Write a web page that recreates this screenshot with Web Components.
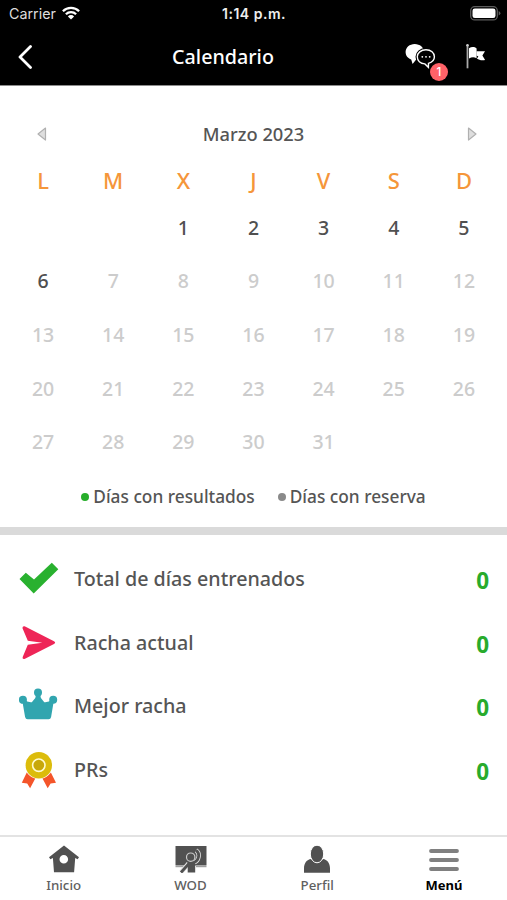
<!DOCTYPE html>
<html lang="es">
<head>
<meta charset="utf-8">
<title>Calendario</title>
<style>
  body {
    margin: 0;
    background: #fff;
    font-family: "Noto Sans", "Open Sans", sans-serif;
    font-weight: 500;
    color: #555;
  }
</style>
</head>
<body>
<calendar-app></calendar-app>

<script>
const ICONS = {
  back: `<svg width="16" height="24" viewBox="0 0 16 24"><path d="M13.500 1.500 3 12 13.500 22.500" fill="none" stroke="#fff" stroke-width="2.800" stroke-linecap="round" stroke-linejoin="round"/></svg>`,
  wifi: `<svg width="18" height="14" viewBox="0 0 18 14"><g fill="none" stroke="#fff" stroke-width="2.300"><path d="M.9 5.200a11.500 11.500 0 0 1 16.200 0"/><path d="M3.900 8.300a7.200 7.200 0 0 1 10.200 0"/></g><path d="M5.900 10.400a4.400 4.400 0 0 1 6.200 0L9 13.500z" fill="#fff"/></svg>`,
  battery: `<svg width="31" height="15" viewBox="0 0 31 15"><rect x=".7" y=".7" width="26.600" height="13.200" rx="4" fill="none" stroke="#5c5c5c" stroke-width="1.300"/><rect x="2.500" y="2.500" width="23" height="9.600" rx="2.300" fill="#fff"/><path d="M28.700 5v4.600q1.700-.8 1.700-2.300T28.700 5z" fill="#5c5c5c"/></svg>`,
  chat: `<svg width="32" height="28" viewBox="0 0 32 28"><path d="M9.700 1C4.500 1 .6 4.600.6 9c0 3.600 2.300 6.300 5.600 7.400L7.600 21l3.400-4.200C16.600 16.600 19 13 19 9c0-4.400-4.100-8-9.300-8z" fill="#fff"/><path d="M21 6.800c-5.200 0-8.700 3.100-8.700 7 0 3.900 3 6.700 7.600 7.100l3.500 3.400.1-4c3.600-1 5.900-3.400 5.900-6.500 0-3.900-3.500-7-8.400-7z" fill="#000" stroke="#000" stroke-width="3.600"/><path d="M21 6.800c-5.200 0-8.700 3.100-8.700 7 0 3.900 3 6.700 7.600 7.100l3.500 3.400.1-4c3.600-1 5.900-3.400 5.900-6.500 0-3.900-3.500-7-8.400-7z" fill="#000" stroke="#fff" stroke-width="1.400"/><g fill="#fff"><circle cx="17.300" cy="13.800" r=".9"/><circle cx="21" cy="13.800" r=".9"/><circle cx="24.700" cy="13.800" r=".9"/></g></svg>`,
  flag: `<svg width="20" height="26" viewBox="0 0 20 26"><path d="M1.500 1.300v23" stroke="#aaa" stroke-width="1.800"/><circle cx="1.500" cy="1.300" r="1.300" fill="#ccc"/><path d="M3 4.200c2.800-1.700 5.600-1.400 7.600.3v9.800c-2.500-1.500-5-1.300-7.600.2z" fill="#fff"/><path d="M10.500 7.200H19l-2.600 4.300 2.700 4.600c-3.200.6-6 .2-8.200-1.500l1.500-2-1.900-1.200z" fill="#fff"/></svg>`,
  prev: `<svg width="10" height="14" viewBox="0 0 10 14"><path d="M8.500 1 1 7l7.500 6z" fill="#dedede" stroke="#b0b0b0" stroke-width="1.200" stroke-linejoin="round"/></svg>`,
  next: `<svg width="10" height="14" viewBox="0 0 10 14"><path d="M1.500 1 9 7l-7.500 6z" fill="#dedede" stroke="#b0b0b0" stroke-width="1.200" stroke-linejoin="round"/></svg>`,
  check: `<svg width="40" height="40" viewBox="0 0 40 40"><path d="M.5 20 6.800 13.700 15 20.400 32.800 3.800 39.300 10.300 14.700 34.600z" fill="#29b12f"/></svg>`,
  send: `<svg width="40" height="40" viewBox="0 0 40 40"><path d="M3.500 5.200c0-1.800 1-2.500 2.600-1.700L35 18.300c1.500.8 1.500 1.900 0 2.700L6 35.800c-1.700.8-2.900-.2-2.200-2L8.800 21.800l14.500-2-14.500-2z" fill="#ee2557"/></svg>`,
  crown: `<svg width="40" height="40" viewBox="0 0 40 40"><g fill="#31a5af"><circle cx="3.900" cy="13.800" r="4"/><circle cx="19" cy="6.400" r="4"/><circle cx="34.200" cy="13.800" r="4"/><path d="M17 8.500h4.200l.7 3.500 3.400 4.200q5 .3 7-2.400l2.400 1.800-2.600 15.500q-.5 2.200-2.500 2.200h-21q-2 0-2.500-2.200L3.400 15.600l2.400-1.800q2 2.700 7 2.400l3.500-4.200z"/></g></svg>`,
  medal: `<svg width="40" height="40" viewBox="0 0 40 40"><path d="M8 22 2.800 32.800l5.400.7 2.900 4.800 6.400-12zM31.600 22l5.400 10.800-5.400.7-2.900 4.800-6.400-12z" fill="#f4552a"/><circle cx="19.800" cy="15.200" r="14" fill="#fff"/><circle cx="19.800" cy="15.200" r="13.200" fill="#dcbc0b"/><circle cx="19.800" cy="15.200" r="6.200" fill="#c8a80a" stroke="#fffbd0" stroke-width="1.600"/></svg>`,
  home: `<svg width="32" height="28" viewBox="0 0 32 28"><path fill-rule="evenodd" d="M16 .5 31 12.300l-1.400 2-2.400-1.400-1.100 14.300H6L4.900 12.900l-2.500 1.400L1 12.300zM15.800 10a4.300 4.300 0 1 0 0 8.600 4.300 4.300 0 0 0 0-8.600z" fill="#515151"/></svg>`,
  board: `<svg width="32" height="28" viewBox="0 0 32 28"><path d="M.5 1h31v19.500H.5z" fill="#515151"/><path d="M.5 21.700h10M21 21.700h10.500" stroke="#888" stroke-width="1"/><path d="M6 27.500 13.500 18.500M19 17.500c5-1.500 6.500-9.500 2-12" fill="none" stroke="#e0e0e0" stroke-width="4.400"/><path d="M6 27.500 14 18.500M18.500 17.500c5.500-1.500 7-9.500 2.500-12" fill="none" stroke="#515151" stroke-width="2.800"/><path d="M12.700 17.500h7.500v10h-7.500z" fill="#515151"/><circle cx="15.700" cy="12.200" r="4.200" fill="#515151" stroke="#ccc" stroke-width="1.200"/></svg>`,
  person: `<svg width="28" height="28" viewBox="0 0 28 28"><path d="M1 27.800v-4.500C1 18 4 14.500 8 14q5.800 6.300 12 0c4 .5 7 4 7 9.300v4.500z" fill="#515151"/><ellipse cx="14" cy="9" rx="6.700" ry="8.800" fill="#515151" stroke="#fff" stroke-width="1"/></svg>`,
  menu: `<svg width="32" height="28" viewBox="0 0 32 28"><path d="M3 6h26M3 15h26M3 24h26" stroke="#808080" stroke-width="3.800" stroke-linecap="round"/></svg>`
};

class UiIcon extends HTMLElement {
  connectedCallback() {
    if (this.shadowRoot) return;
    this.attachShadow({ mode: "open" });
    this.shadowRoot.innerHTML = `
      <style>
        :host { display: block; line-height: 0; }
        svg { display: block; }
      </style>
      ${ICONS[this.getAttribute("name")] || ""}`;
  }
}
customElements.define("ui-icon", UiIcon);

class StatusBar extends HTMLElement {
  constructor() {
    super();
    this.attachShadow({ mode: "open" });
    this.shadowRoot.innerHTML = `
      <style>
        :host {
          display: grid;
          grid-template-columns: 1fr auto 1fr;
          align-items: center;
          box-sizing: border-box;
          height: 28px;
          padding: 0 6px 2px 9px;
          background: #000;
          color: #ddd;
          font: 400 14.3px Inter, sans-serif;
        }
        .carrier { display: flex; align-items: center; gap: 6px; }
        .time { font-weight: 600; color: #eee; font-size: 14px; letter-spacing: 0.5px; padding-right: 2px; }
        .battery { justify-self: end; }
      </style>
      <div class="carrier"><span>Carrier</span><ui-icon name="wifi"></ui-icon></div>
      <div class="time">1:14 p.m.</div>
      <ui-icon class="battery" name="battery"></ui-icon>`;
  }
}
customElements.define("status-bar", StatusBar);

class NavBar extends HTMLElement {
  constructor() {
    super();
    this.attachShadow({ mode: "open" });
    this.shadowRoot.innerHTML = `
      <style>
        :host {
          display: grid;
          grid-template-columns: 120px 1fr 120px;
          align-items: center;
          height: 57px;
          background: #000;
          border-bottom: 1px solid #8c8c8c;
          color: #fff;
        }
        .back { padding-left: 17px; }
        .title { font-size: 19.700px; line-height: 26px; padding-right: 61px; text-align: center; }
        .actions { display: flex; justify-content: flex-end; align-items: center; gap: 29px; padding-right: 21px; }
        .chat { position: relative; }
        .badge {
          position: absolute;
          left: 25px;
          top: 20px;
          width: 18px;
          height: 18px;
          border-radius: 50%;
          background: #ff6268;
          font: 500 11.500px/18px Inter, sans-serif;
          text-align: center;
        }
      </style>
      <ui-icon class="back" name="back"></ui-icon>
      <div class="title"><slot></slot></div>
      <div class="actions">
        <div class="chat"><ui-icon name="chat"></ui-icon><span class="badge">1</span></div>
        <ui-icon name="flag"></ui-icon>
      </div>`;
  }
}
customElements.define("nav-bar", NavBar);

class MonthCalendar extends HTMLElement {
  connectedCallback() {
    const offset = Number(this.getAttribute("offset"));
    const days = Number(this.getAttribute("days"));
    const today = Number(this.getAttribute("today"));
    let cells = "<span></span>".repeat(offset);
    for (let d = 1; d <= days; d++) {
      cells += `<span class="${d > today ? "future" : ""}">${d}</span>`;
    }
    this.attachShadow({ mode: "open" });
    this.shadowRoot.innerHTML = `
      <style>
        :host { display: block; height: 441px; box-sizing: border-box; padding: 34px 8px 0; }
        .month {
          display: flex;
          justify-content: space-between;
          align-items: center;
          height: 28px;
          padding: 0 22px 0 29px;
          font-size: 18.300px;
        }
        .month div { padding-right: 7px; margin-top: -2px; }
        .week, .days { display: grid; grid-template-columns: repeat(7, 1fr); text-align: center; }
        .week { margin-top: 16px; font-size: 22px; line-height: 32px; color: #f5963a; }
        .days { margin-top: 4.500px; grid-auto-rows: 53.700px; font-size: 19.500px; line-height: 54px; color: #505050; }
        .future { color: #ccc; }
        .legend { display: flex; justify-content: center; gap: 23px; font-size: 17.300px; line-height: 26px; margin-top: 15px; }
        .legend span { display: flex; align-items: center; gap: 4px; }
        .legend span::before { content: ""; width: 8px; height: 8px; border-radius: 50%; background: #8a8a8a; }
        .legend .done::before { background: #27ae2b; }
      </style>
      <div class="month"><ui-icon name="prev"></ui-icon><div><slot></slot></div><ui-icon name="next"></ui-icon></div>
      <div class="week">${["L", "M", "X", "J", "V", "S", "D"].map(n => `<span>${n}</span>`).join("")}</div>
      <div class="days">${cells}</div>
      <div class="legend"><span class="done">Días con resultados</span><span>Días con reserva</span></div>`;
  }
}
customElements.define("month-calendar", MonthCalendar);

class StatRow extends HTMLElement {
  connectedCallback() {
    this.attachShadow({ mode: "open" });
    this.shadowRoot.innerHTML = `
      <style>
        :host { display: flex; align-items: center; height: 63.500px; padding: 0 18px 0 19px; }
        .label { flex: 1; margin-left: 15px; font-size: 19.700px; line-height: 28px; }
        .value { color: #28ab2c; font: 700 22.500px/28px "Open Sans", sans-serif; padding-top: 4px; }
      </style>
      <ui-icon name="${this.getAttribute("icon")}"></ui-icon>
      <span class="label"><slot></slot></span>
      <span class="value">${this.getAttribute("value")}</span>`;
  }
}
customElements.define("stat-row", StatRow);

class TabItem extends HTMLElement {
  connectedCallback() {
    this.attachShadow({ mode: "open" });
    this.shadowRoot.innerHTML = `
      <style>
        :host { display: flex; flex: 1; flex-direction: column; align-items: center; font-size: 13.300px; line-height: 20px; color: #606060; }
        :host([active]) { color: #000; font-weight: 700; font-size: 13px; }
        ui-icon { padding-left: 1px; }
        span { margin-top: 2px; padding-left: 0.6px; }
      </style>
      <ui-icon name="${this.getAttribute("icon")}"></ui-icon>
      <span><slot></slot></span>`;
  }
}
customElements.define("tab-item", TabItem);

class CalendarApp extends HTMLElement {
  constructor() {
    super();
    this.attachShadow({ mode: "open" });
    this.shadowRoot.innerHTML = `
      <style>
        :host { display: flex; flex-direction: column; height: 900px; overflow: hidden; }
        .divider { height: 8px; background: #dadada; }
        .stats { flex: 1; padding-top: 12.600px; }
        .tabs { display: flex; box-sizing: border-box; height: 65px; padding-top: 8px; border-top: 2px solid #e3e3e3; }
      </style>
      <status-bar></status-bar>
      <nav-bar>Calendario</nav-bar>
      <month-calendar offset="2" days="31" today="6">Marzo 2023</month-calendar>
      <div class="divider"></div>
      <div class="stats">
        <stat-row icon="check" value="0">Total de días entrenados</stat-row>
        <stat-row icon="send" value="0">Racha actual</stat-row>
        <stat-row icon="crown" value="0">Mejor racha</stat-row>
        <stat-row icon="medal" value="0">PRs</stat-row>
      </div>
      <div class="tabs">
        <tab-item icon="home">Inicio</tab-item>
        <tab-item icon="board">WOD</tab-item>
        <tab-item icon="person">Perfil</tab-item>
        <tab-item icon="menu" active>Menú</tab-item>
      </div>`;
  }
}
customElements.define("calendar-app", CalendarApp);
</script>
</body>
</html>
